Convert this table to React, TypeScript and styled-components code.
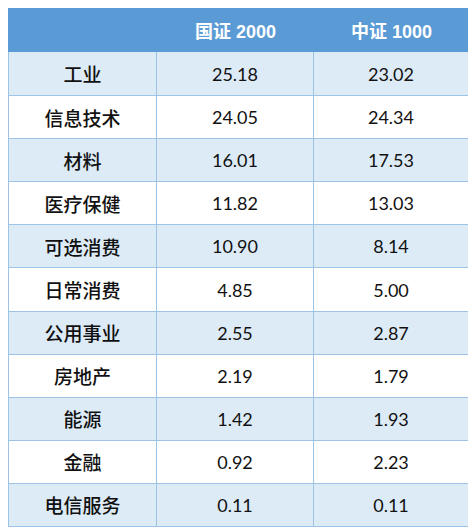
import styled, { createGlobalStyle } from "styled-components";

const GlobalStyle = createGlobalStyle`
  body {
    margin: 8px;
    background: #ffffff;
    font-family: "Liberation Sans", "Noto Sans CJK SC", sans-serif;
  }
`;

const headerBlue = "#5b9bd5";
const lightRow = "#ddebf7";
const lineColor = "#9dc3e6";

const rows: [string, string, string][] = [
  ["工业", "25.18", "23.02"],
  ["信息技术", "24.05", "24.34"],
  ["材料", "16.01", "17.53"],
  ["医疗保健", "11.82", "13.03"],
  ["可选消费", "10.90", "8.14"],
  ["日常消费", "4.85", "5.00"],
  ["公用事业", "2.55", "2.87"],
  ["房地产", "2.19", "1.79"],
  ["能源", "1.42", "1.93"],
  ["金融", "0.92", "2.23"],
  ["电信服务", "0.11", "0.11"],
];

export default function App() {
  return (
    <>
      <GlobalStyle />
      <Table>
        <HeaderRow>
          <HeaderCell />
          <HeaderCell>国证 2000</HeaderCell>
          <HeaderCell>中证 1000</HeaderCell>
        </HeaderRow>
        {rows.map(([name, a, b], i) => (
          <Row key={name} $shaded={i % 2 === 0}>
            <NameCell>{name}</NameCell>
            <NumCell>{a}</NumCell>
            <NumCell $last>{b}</NumCell>
          </Row>
        ))}
      </Table>
    </>
  );
}

const Table = styled.div`
  width: 461px;
  display: flex;
  flex-direction: column;
  border-left: 1px solid ${lineColor};
  border-right: 1px solid ${lineColor};
  border-bottom: 1px solid ${lineColor};
  box-sizing: border-box;
`;

const HeaderRow = styled.div`
  display: grid;
  grid-template-columns: 149px 157px 1fr;
  height: 44px;
  background: ${headerBlue};
  margin: 0 -1px;
`;

const HeaderCell = styled.div`
  display: flex;
  align-items: center;
  justify-content: center;
  color: #ffffff;
  font-weight: bold;
  font-size: 18px;
  font-family: "Liberation Sans", "Noto Sans CJK SC", sans-serif;
`;

const Row = styled.div<{ $shaded: boolean }>`
  display: grid;
  grid-template-columns: 148px 157px 1fr;
  height: 43.1px;
  box-sizing: border-box;
  background: ${(p) => (p.$shaded ? lightRow : "#ffffff")};
  & + & {
    border-top: 1px solid ${lineColor};
  }
`;

const NameCell = styled.div`
  display: flex;
  align-items: center;
  justify-content: center;
  border-right: 1px solid ${lineColor};
  color: #111111;
  font-size: 19px;
  font-weight: 500;
  font-family: "Noto Sans CJK SC", sans-serif;
`;

const NumCell = styled.div<{ $last?: boolean }>`
  display: flex;
  align-items: center;
  justify-content: center;
  border-right: ${(p) => (p.$last ? "none" : `1px solid ${lineColor}`)};
  color: #111111;
  font-size: 18px;
  font-family: "Lato", "Liberation Sans", sans-serif;
`;
